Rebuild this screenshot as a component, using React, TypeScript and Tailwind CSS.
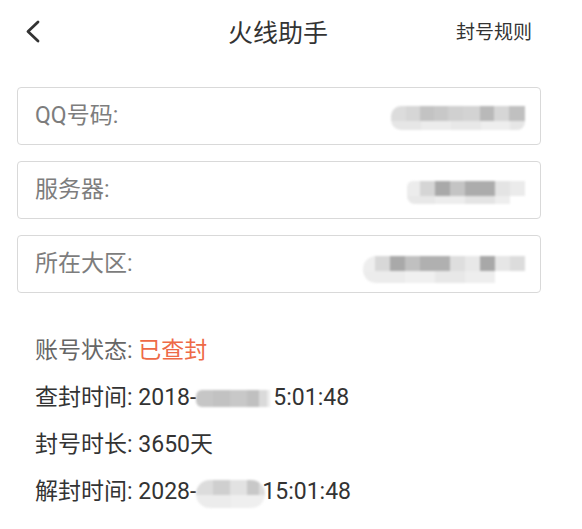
import React from 'react';

// blurred (mosaic) areas that hide personal data in the screenshot
type Row = { h: string; cells: string[] };

function Mosaic({ rows, className = '' }: { rows: Row[]; className?: string }) {
  return (
    <div className={`flex flex-col overflow-hidden blur-[0.8px] ${className}`}>
      {rows.map((row, i) => (
        <div key={i} className={`flex ${row.h}`}>
          {row.cells.map((c, j) => (
            <div key={j} className={`h-full ${c}`} />
          ))}
        </div>
      ))}
    </div>
  );
}

const qqRows: Row[] = [
  {
    h: 'h-[15px]',
    cells: [
      'w-[15px] bg-[#dcdcdc]', 'w-[14px] bg-[#d6d6d6]', 'w-[14px] bg-[#c3c3c3]',
      'w-[14px] bg-[#c8c8c8]', 'w-[15px] bg-[#d0d0d0]', 'w-[17px] bg-[#d3d3d3]',
      'w-[14px] bg-[#b9b9b9]', 'w-[15px] bg-[#d6d6d6]', 'w-[16px] bg-[#c0c0c0]',
    ],
  },
  {
    h: 'h-[9px]',
    cells: [
      'w-[30px] bg-[#e6e6e6]', 'w-[30px] bg-[#ececec]', 'w-[30px] bg-[#e8e8e8]',
      'w-[29px] bg-[#eeeeee]', 'w-[15px] bg-[#e6e6e6]',
    ],
  },
];

const serverRows: Row[] = [
  {
    h: 'h-[15px]',
    cells: [
      'w-[13px] bg-[#ececec]', 'w-[15px] bg-[#d5d5d5]', 'w-[15px] bg-[#a9a9a9]',
      'w-[15px] bg-[#c4c4c4]', 'w-[30px] bg-[#acacac]', 'w-[15px] bg-[#e4e4e4]',
      'w-[15px] bg-[#ebebeb]',
    ],
  },
  {
    h: 'h-[8px]',
    cells: [
      'w-[28px] bg-[#e8e8e8] rounded-bl-[8px]', 'w-[30px] bg-[#ededed]', 'w-[30px] bg-[#e4e4e4]',
      'w-[15px] bg-[#eeeeee]', 'w-[15px] bg-transparent',
    ],
  },
];

const regionRows: Row[] = [
  {
    h: 'h-[15px]',
    cells: [
      'w-[12px] bg-[#eeeeee]', 'w-[15px] bg-[#d8d8d8]', 'w-[15px] bg-[#a9a9a9]',
      'w-[15px] bg-[#c0c0c0]', 'w-[30px] bg-[#b0b0b0]', 'w-[15px] bg-[#dedede]',
      'w-[15px] bg-[#e8e8e8]', 'w-[15px] bg-[#a8a8a8]', 'w-[15px] bg-[#e6e6e6]',
      'w-[15px] bg-[#dcdcdc]',
    ],
  },
  {
    h: 'h-[12px]',
    cells: [
      'w-[42px] bg-[#ececec] rounded-bl-[12px]', 'w-[30px] bg-[#f0f0f0]', 'w-[30px] bg-[#e8e8e8]',
      'w-[30px] bg-[#eeeeee]', 'w-[30px] bg-transparent',
    ],
  },
];

const banRows: Row[] = [
  {
    h: 'h-[17px]',
    cells: [
      'w-[17px] bg-[#c6c6c6]', 'w-[17px] bg-[#c2c2c2]', 'w-[17px] bg-[#c8c8c8]',
      'w-[12px] bg-[#c0c0c0]', 'w-[8px] bg-[#dadada]', 'w-[3px] bg-[#ececec]',
    ],
  },
];

const unbanRows: Row[] = [
  {
    h: 'h-[15px]',
    cells: [
      'w-[17px] bg-[#dcdcdc]', 'w-[17px] bg-[#cfcfcf]', 'w-[17px] bg-[#e2e2e2]',
      'w-[12px] bg-[#c8c8c8]', 'w-[6px] bg-[#dddddd]',
    ],
  },
  {
    h: 'h-[13px]',
    cells: ['w-[35px] bg-[#ececec]', 'w-[34px] bg-[#efefef]'],
  },
];

function Field({ label, children }: { label: string; children: React.ReactNode }) {
  return (
    <div className="flex h-[58px] w-[524px] items-center justify-between rounded-[4px] border border-[#d9d9d9] pl-[17px] pr-[15px]">
      <span className="text-[23px] text-[#7d7d7d]">{label}</span>
      {children}
    </div>
  );
}

export default function App() {
  return (
    <div className="min-h-[529px] w-[582px] bg-white font-['Roboto','Noto_Sans_CJK_SC',sans-serif] text-[#333333]">
      {/* header */}
      <header className="flex h-[66px] items-center">
        <div className="w-[228px] pl-[25px]">
          <svg width="15" height="23" viewBox="0 0 15 23" fill="none" className="-mt-[3px]">
            <path d="M13 2 L3 11.5 L13 21" stroke="#333" strokeWidth="2.8" strokeLinecap="round" strokeLinejoin="round" />
          </svg>
        </div>
        <h1 className="text-[25px] font-normal leading-none">火线助手</h1>
        <span className="ml-auto pr-[50px] text-[19px]">封号规则</span>
      </header>

      {/* form */}
      <div className="ml-[17px] mt-[21px] flex flex-col gap-[16px]">
        <Field label="QQ号码:">
          <Mosaic rows={qqRows} className="mt-[3px] rounded-l-[10px] rounded-br-[8px]" />
        </Field>
        <Field label="服务器:">
          <Mosaic rows={serverRows} className="mt-[5px] rounded-tl-[6px]" />
        </Field>
        <Field label="所在大区:">
          <Mosaic rows={regionRows} className="mt-[11px] rounded-l-[13px]" />
        </Field>
      </div>

      {/* result */}
      <div className="ml-[35px] mt-[34px] text-[23px] leading-[47px]">
        <div>
          <span className="text-[#666666]">账号状态: </span>
          <span className="text-[#ee6a47]">已查封</span>
        </div>
        <div className="flex items-center">
          <span>查封时间: 2018-</span>
          <Mosaic rows={banRows} className="mt-[2px] rounded-l-[6px]" />
          <span className="ml-[3px]">5:01:48</span>
        </div>
        <div>封号时长: 3650天</div>
        <div className="flex items-center">
          <span>解封时间: 2028-</span>
          <Mosaic rows={unbanRows} className="mt-[4px] rounded-full" />
          <span className="-ml-[3px]">15:01:48</span>
        </div>
      </div>
    </div>
  );
}
